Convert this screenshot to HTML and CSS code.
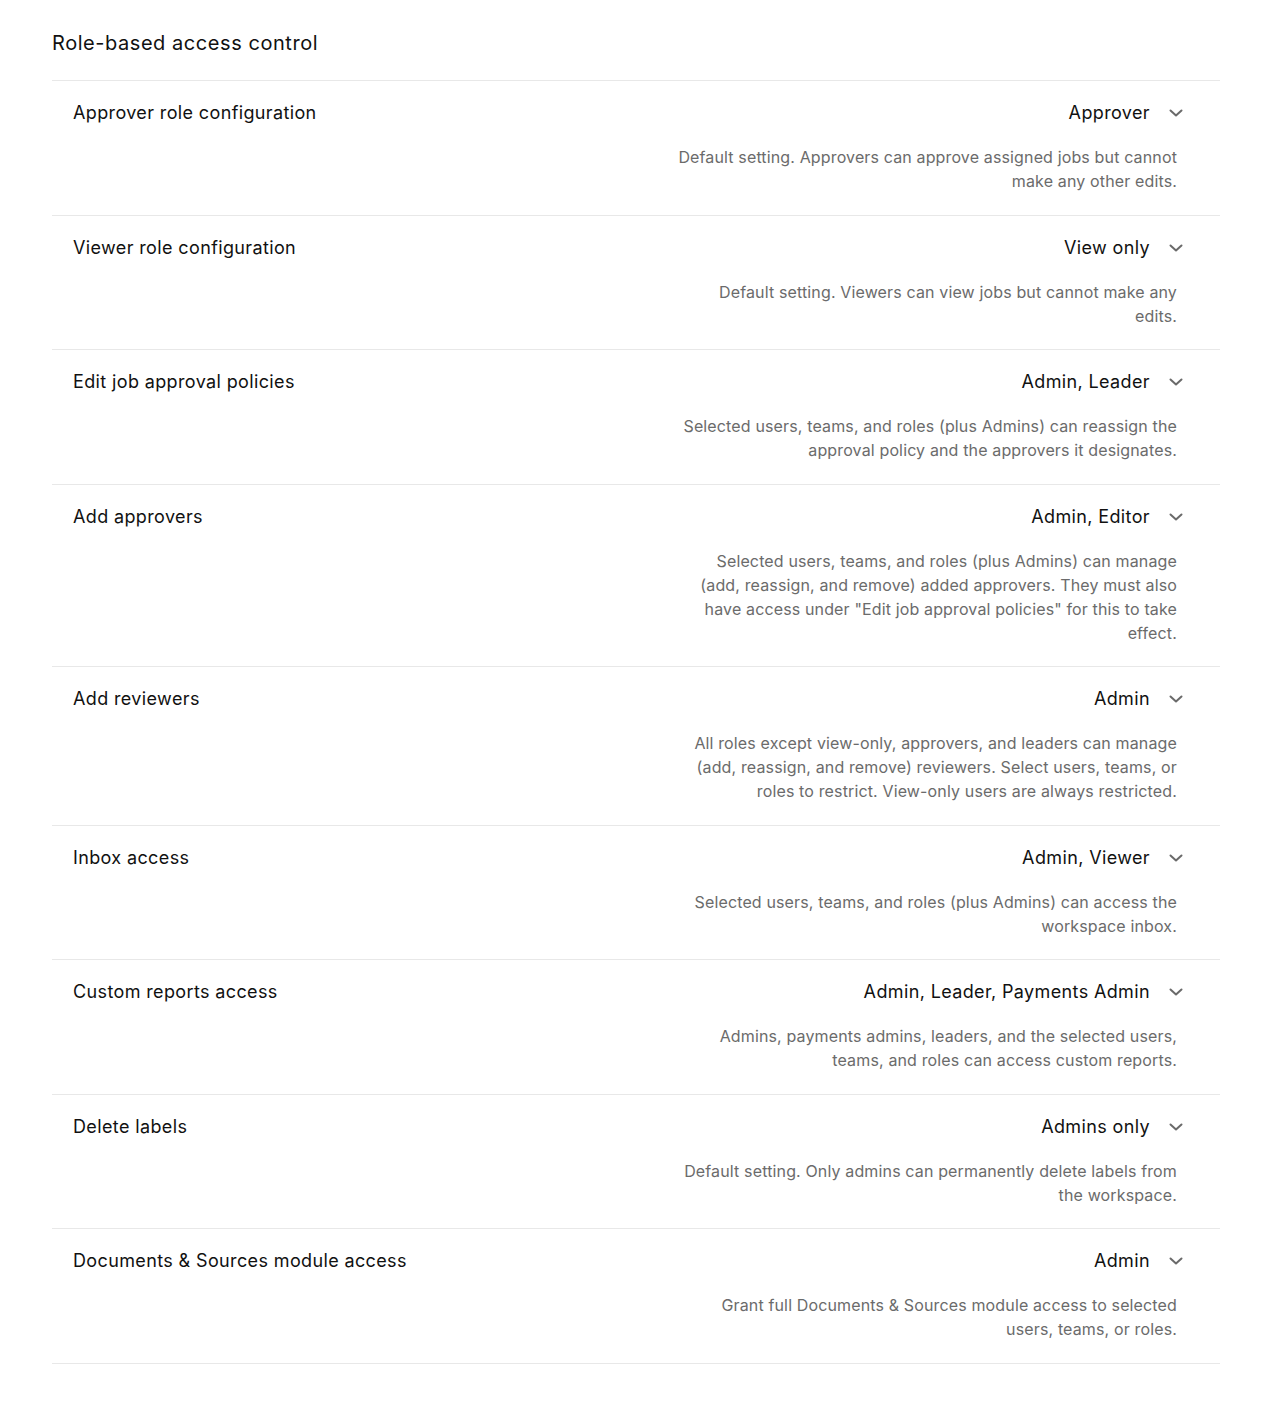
FILE: index.html
```html
<!DOCTYPE html>
<html lang="en">
<head>
<meta charset="utf-8">
<title>Role-based access control</title>
<link rel="stylesheet" href="styles.css">
</head>
<body>
<section class="settings">
  <h2 class="settings-title">Role-based access control</h2>
  <ul class="setting-list">
    <li class="setting">
      <div class="setting-label">Approver role configuration</div>
      <div class="setting-control">
        <button class="select" type="button"><span>Approver</span><svg class="chev" viewBox="0 0 14 8" aria-hidden="true"><path d="M1.5 1.5 7 6.5 12.5 1.5"/></svg></button>
        <p class="setting-help">Default setting. Approvers can approve assigned jobs but cannot make any other edits.</p>
      </div>
    </li>
    <li class="setting">
      <div class="setting-label">Viewer role configuration</div>
      <div class="setting-control">
        <button class="select" type="button"><span>View only</span><svg class="chev" viewBox="0 0 14 8" aria-hidden="true"><path d="M1.5 1.5 7 6.5 12.5 1.5"/></svg></button>
        <p class="setting-help">Default setting. Viewers can view jobs but cannot make any edits.</p>
      </div>
    </li>
    <li class="setting">
      <div class="setting-label">Edit job approval policies</div>
      <div class="setting-control">
        <button class="select" type="button"><span>Admin, Leader</span><svg class="chev" viewBox="0 0 14 8" aria-hidden="true"><path d="M1.5 1.5 7 6.5 12.5 1.5"/></svg></button>
        <p class="setting-help">Selected users, teams, and roles (plus Admins) can reassign the approval policy and the approvers it designates.</p>
      </div>
    </li>
    <li class="setting">
      <div class="setting-label">Add approvers</div>
      <div class="setting-control">
        <button class="select" type="button"><span>Admin, Editor</span><svg class="chev" viewBox="0 0 14 8" aria-hidden="true"><path d="M1.5 1.5 7 6.5 12.5 1.5"/></svg></button>
        <p class="setting-help">Selected users, teams, and roles (plus Admins) can manage (add, reassign, and remove) added approvers. They must also have access under "Edit job approval policies" for this to take effect.</p>
      </div>
    </li>
    <li class="setting">
      <div class="setting-label">Add reviewers</div>
      <div class="setting-control">
        <button class="select" type="button"><span>Admin</span><svg class="chev" viewBox="0 0 14 8" aria-hidden="true"><path d="M1.5 1.5 7 6.5 12.5 1.5"/></svg></button>
        <p class="setting-help">All roles except view-only, approvers, and leaders can manage (add, reassign, and remove) reviewers. Select users, teams, or roles to restrict. View-only users are always restricted.</p>
      </div>
    </li>
    <li class="setting">
      <div class="setting-label">Inbox access</div>
      <div class="setting-control">
        <button class="select" type="button"><span>Admin, Viewer</span><svg class="chev" viewBox="0 0 14 8" aria-hidden="true"><path d="M1.5 1.5 7 6.5 12.5 1.5"/></svg></button>
        <p class="setting-help">Selected users, teams, and roles (plus Admins) can access the workspace inbox.</p>
      </div>
    </li>
    <li class="setting">
      <div class="setting-label">Custom reports access</div>
      <div class="setting-control">
        <button class="select" type="button"><span>Admin, Leader, Payments Admin</span><svg class="chev" viewBox="0 0 14 8" aria-hidden="true"><path d="M1.5 1.5 7 6.5 12.5 1.5"/></svg></button>
        <p class="setting-help">Admins, payments admins, leaders, and the selected users, teams, and roles can access custom reports.</p>
      </div>
    </li>
    <li class="setting">
      <div class="setting-label">Delete labels</div>
      <div class="setting-control">
        <button class="select" type="button"><span>Admins only</span><svg class="chev" viewBox="0 0 14 8" aria-hidden="true"><path d="M1.5 1.5 7 6.5 12.5 1.5"/></svg></button>
        <p class="setting-help">Default setting. Only admins can permanently delete labels from the workspace.</p>
      </div>
    </li>
    <li class="setting">
      <div class="setting-label">Documents &amp; Sources module access</div>
      <div class="setting-control">
        <button class="select" type="button"><span>Admin</span><svg class="chev" viewBox="0 0 14 8" aria-hidden="true"><path d="M1.5 1.5 7 6.5 12.5 1.5"/></svg></button>
        <p class="setting-help">Grant full Documents &amp; Sources module access to selected users, teams, or roles.</p>
      </div>
    </li>
  </ul>
</section>
</body>
</html>
```

FILE: styles.css
```css
* {
  box-sizing: border-box;
}

body {
  margin: 0;
  background: #ffffff;
  color: #111111;
  font-family: Inter, "Liberation Sans", sans-serif;
}

.settings {
  margin: 0 44px 0 52px;
  padding-top: 29px;
}

.settings-title {
  margin: 0;
  font-size: 20px;
  font-weight: 400;
  line-height: 28px;
  letter-spacing: 0.55px;
  padding-bottom: 23px;
  border-bottom: 1px solid #e8e8e8;
}

.setting-list {
  list-style: none;
  margin: 0;
  padding: 0;
}

.setting {
  display: flex;
  justify-content: space-between;
  align-items: flex-start;
  padding: 20px 43px 21.5px 21px;
  border-bottom: 1px solid #e8e8e8;
}

.setting-label {
  font-size: 18px;
  line-height: 24px;
  font-weight: 400;
  letter-spacing: 0.37px;
}

.setting-control {
  display: flex;
  flex-direction: column;
  align-items: flex-end;
  gap: 20px;
}

.select {
  display: flex;
  align-items: center;
  gap: 19px;
  margin: 0 -6px 0 0;
  padding: 0;
  border: 0;
  background: none;
  font: inherit;
  font-size: 18px;
  line-height: 24px;
  letter-spacing: 0.37px;
  color: #111111;
  cursor: pointer;
}

.chev {
  width: 14px;
  height: 8px;
  fill: none;
  stroke: #6a6a6a;
  stroke-width: 2;
  stroke-linecap: round;
  stroke-linejoin: round;
}

.setting-help {
  margin: 0;
  max-width: 501px;
  font-size: 16px;
  line-height: 24px;
  letter-spacing: 0.14px;
  color: #6b6b6b;
  text-align: right;
}
```
